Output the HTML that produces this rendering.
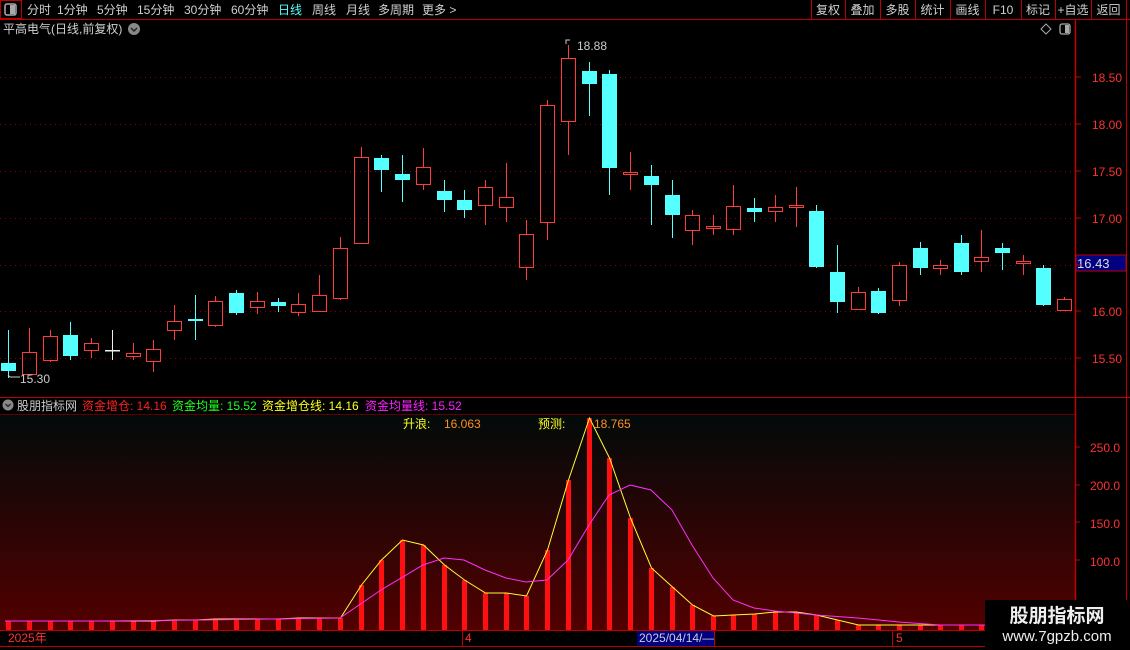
<!DOCTYPE html>
<html><head><meta charset="utf-8"><style>
html,body{margin:0;padding:0;background:#000;width:1130px;height:650px;overflow:hidden;font-family:"Liberation Sans","Noto Sans CJK SC",sans-serif}
svg{position:absolute;left:0;top:0}
</style></head><body>
<svg id="s" width="1130" height="650" xmlns="http://www.w3.org/2000/svg" font-family="Liberation Sans, Noto Sans CJK SC, sans-serif">
<defs><linearGradient id="g" x1="0" y1="0" x2="0" y2="1"><stop offset="0" stop-color="#020a0a"/><stop offset="1" stop-color="#520000"/></linearGradient></defs>
<rect x="0" y="415" width="1075" height="215" fill="url(#g)"/>
<line x1="0" y1="19.5" x2="1130" y2="19.5" stroke="#c00000"/>
<rect x="0.5" y="0.5" width="21" height="18" fill="none" stroke="#c00000"/>
<rect x="5" y="4" width="11" height="11" rx="2" fill="none" stroke="#aaa" stroke-width="1.5"/><rect x="10" y="5" width="5" height="9" fill="#aaa"/>
<g font-size="12" fill="#d0d0d0">
<text x="27" y="14">分时</text><text x="57" y="14">1分钟</text><text x="97" y="14">5分钟</text><text x="137" y="14">15分钟</text><text x="184" y="14">30分钟</text><text x="231" y="14">60分钟</text>
<text x="278" y="14" fill="#5ff">日线</text><text x="312" y="14">周线</text><text x="346" y="14">月线</text><text x="378" y="14">多周期</text><text x="422" y="14">更多 &gt;</text>
</g>
<g font-size="12" fill="#d0d0d0" text-anchor="middle">
<text x="828" y="14">复权</text><text x="862.5" y="14">叠加</text><text x="897.5" y="14">多股</text><text x="932.5" y="14">统计</text><text x="967.5" y="14">画线</text><text x="1003" y="14">F10</text><text x="1038" y="14">标记</text><text x="1073" y="14">+自选</text><text x="1108.5" y="14">返回</text>
</g>
<g stroke="#c00000"><line x1="811.5" y1="0" x2="811.5" y2="19"/><line x1="845.5" y1="0" x2="845.5" y2="19"/><line x1="880.5" y1="0" x2="880.5" y2="19"/><line x1="915.5" y1="0" x2="915.5" y2="19"/><line x1="950.5" y1="0" x2="950.5" y2="19"/><line x1="985.5" y1="0" x2="985.5" y2="19"/><line x1="1021.5" y1="0" x2="1021.5" y2="19"/><line x1="1055.5" y1="0" x2="1055.5" y2="19"/><line x1="1091.5" y1="0" x2="1091.5" y2="19"/><line x1="1126.5" y1="0" x2="1126.5" y2="650"/></g>
<text x="3" y="33" font-size="12" fill="#d0d0d0">平高电气(日线,前复权)</text>
<circle cx="134" cy="29" r="6" fill="#888"/><path d="M131 28l3 3 3-3" stroke="#222" stroke-width="1.5" fill="none"/>
<path d="M1046 24l5 5-5 5-5-5z" fill="none" stroke="#aaa"/>
<rect x="1060" y="24" width="10" height="10" rx="2" fill="none" stroke="#aaa" stroke-width="1.3"/><rect x="1065" y="25" width="4" height="8" fill="#aaa"/>
<line x1="1075.5" y1="19" x2="1075.5" y2="646" stroke="#c00000" stroke-width="1.5"/>
<line x1="0" y1="397.5" x2="1130" y2="397.5" stroke="#c00000"/>
<line x1="0" y1="414.5" x2="1075" y2="414.5" stroke="#c00000" stroke-width="0.5"/>
<line x1="0" y1="630.5" x2="1075" y2="630.5" stroke="#c00000"/>
<line x1="0" y1="646.5" x2="1130" y2="646.5" stroke="#c00000"/>
<g id="grid" stroke="#8a0000" stroke-dasharray="1,4"></g>
<g id="price" font-size="12" fill="#ff3030"></g>
<rect x="1076" y="255" width="50" height="16" fill="#000080" stroke="#c00000"/>
<text x="1077" y="268" font-size="13" fill="#ddd">16.43</text>
<g id="c"></g>
<text x="577" y="50" font-size="12" fill="#ccc">18.88</text><path d="M566 44v-4h4" stroke="#ccc" fill="none"/>
<text x="20" y="383" font-size="12" fill="#ccc">15.30</text><path d="M8 375l2 2h10" stroke="#ccc" fill="none"/>
<circle cx="8" cy="405" r="5.5" fill="#888"/><path d="M5.5 404l2.5 2.5 2.5-2.5" stroke="#222" stroke-width="1.3" fill="none"/>
<g font-size="12"><text x="17" y="410" fill="#ccc">股朋指标网</text><text x="82" y="410" fill="#ff2020">资金增仓: 14.16</text><text x="172" y="410" fill="#20ff20">资金均量: 15.52</text><text x="262" y="410" fill="#ffff20">资金增仓线: 14.16</text><text x="365" y="410" fill="#ff20ff">资金均量线: 15.52</text>
<text x="403" y="428" fill="#ffff20">升浪:</text><text x="444" y="428" fill="#ff9020">16.063</text><text x="538" y="428" fill="#ffff20">预测:</text><text x="594" y="428" fill="#ff9020">18.765</text></g>
<g id="ind"></g>
<g font-size="12" fill="#ff3030"><text x="1090" y="452">250.0</text><text x="1090" y="490">200.0</text><text x="1090" y="528">150.0</text><text x="1090" y="566">100.0</text></g>
<g stroke="#c00000"><line x1="1076" y1="447" x2="1080" y2="447"/><line x1="1076" y1="485" x2="1080" y2="485"/><line x1="1076" y1="522" x2="1080" y2="522"/><line x1="1076" y1="560" x2="1080" y2="560"/></g>
<text x="8" y="642" font-size="12" fill="#ff3030">2025年</text>
<line x1="462.5" y1="631" x2="462.5" y2="646" stroke="#c00000"/><text x="465" y="642" font-size="12" fill="#ff3030">4</text>
<rect x="637" y="631" width="77" height="15" fill="#000080"/><text x="639" y="642" font-size="12" fill="#ccc">2025/04/14/—</text>
<line x1="714.5" y1="631" x2="714.5" y2="646" stroke="#c00000"/>
<line x1="892.5" y1="631" x2="892.5" y2="646" stroke="#c00000"/><text x="896" y="642" font-size="12" fill="#ff3030">5</text>
<rect x="985" y="600" width="145" height="50" fill="#000"/>
<text x="1057" y="622" font-size="19" font-weight="bold" fill="#eee" text-anchor="middle">股朋指标网</text>
<text x="1057" y="641" font-size="15" fill="#eee" text-anchor="middle">www.7gpzb.com</text>
</svg>
<script>
var NS="http://www.w3.org/2000/svg";
function el(p,t,a){var e=document.createElementNS(NS,t);for(var k in a)e.setAttribute(k,a[k]);p.appendChild(e);return e;}
var grid=document.getElementById('grid'),price=document.getElementById('price');
var lv=[[77,"18.50"],[124,"18.00"],[171,"17.50"],[218,"17.00"],[265,""],[311,"16.00"],[358,"15.50"]];
lv.forEach(function(l){el(grid,'line',{x1:0,y1:l[0]+.5,x2:1075,y2:l[0]+.5});el(document.getElementById('s'),'line',{x1:1076,y1:l[0],x2:1081,y2:l[0],stroke:'#c00000'});if(l[1]){var t=el(price,'text',{x:1092,y:l[0]+5});t.textContent=l[1];}});
var C=[[8,'c',363,371,330,378],[29,'r',352,374,328,376],[50,'r',336,360,330,362],[70,'c',335,356,322,360],[91,'r',343,350,338,358],[112,'w',350,351,330,360],[133,'r',353,356,343,360],[153,'r',349,361,340,372],[174,'r',321,330,305,340],[195,'c',319,321,295,340],[215,'r',301,325,296,327],[236,'c',293,313,290,315],[257,'r',301,307,292,314],[278,'c',302,306,298,312],[298,'r',304,312,293,316],[319,'r',295,311,275,312],[340,'r',248,298,237,300],[361,'r',157,243,147,244],[381,'c',158,170,155,192],[402,'c',174,180,155,202],[423,'r',167,184,148,190],[444,'c',191,200,180,212],[464,'c',200,210,190,218],[485,'r',187,205,180,225],[506,'r',197,207,163,222],[526,'r',234,267,220,280],[547,'r',105,222,100,240],[568,'r',58,121,45,155],[589,'c',71,84,62,116],[609,'c',74,168,70,195],[630,'r',172,174,152,190],[651,'c',176,185,165,225],[672,'c',195,215,180,238],[692,'r',215,230,210,245],[713,'r',226,228,215,235],[733,'r',206,229,185,235],[754,'c',208,212,198,222],[775,'r',207,211,195,222],[796,'r',205,207,187,227],[816,'c',211,267,205,268],[837,'c',272,302,245,313],[858,'r',292,309,287,310],[878,'c',291,313,288,314],[899,'r',265,300,262,306],[920,'c',248,268,242,275],[940,'r',265,268,260,275],[961,'c',243,272,235,275],[981,'r',257,261,230,272],[1002,'c',248,253,243,270],[1023,'r',261,263,255,275],[1043,'c',268,305,265,306],[1064,'r',299,310,297,310]];
var cg=document.getElementById('c');
C.forEach(function(d){var x=d[0],col=d[1]=='c'?'#54ffff':(d[1]=='w'?'#eee':'#ff3c3c');
if(d[1]=='r'){el(cg,'line',{x1:x+.5,y1:d[4],x2:x+.5,y2:d[2],stroke:col});el(cg,'line',{x1:x+.5,y1:d[3],x2:x+.5,y2:d[5],stroke:col});el(cg,'rect',{x:x-6.5,y:d[2]+.5,width:14,height:Math.max(d[3]-d[2],1),fill:'none',stroke:col});}
else{el(cg,'line',{x1:x+.5,y1:d[4],x2:x+.5,y2:d[5],stroke:col});el(cg,'rect',{x:x-7,y:d[2],width:15,height:Math.max(d[3]-d[2],1.5),fill:col});}});
var B=[621,621,621,621,621,621,621,621,620,620,619,619,619,619,618,618,618,585,560,540,545,565,580,593,593,596,550,480,418,458,518,568,587,605,616,615,614,612,612,615,620,625,625,625,625,625,625,625,625,624,624,624];
var M=[[5,621],[100,621],[200,620],[340,618],[381,590],[423,565],[444,558],[464,560],[485,570],[506,578],[526,582],[547,580],[568,560],[589,525],[609,495],[630,485],[651,490],[672,510],[692,545],[713,578],[733,600],[754,608],[775,611],[796,613],[816,615],[858,618],[899,622],[940,625],[1070,625]];
var ig=document.getElementById('ind');var yp="";
C.forEach(function(d,i){var x=d[0],t=B[i];el(ig,'rect',{x:x-2,y:t,width:5,height:630-t,fill:'#ff1010'});yp+=(i?'L':'M')+(x+.5)+' '+t;});
el(ig,'path',{d:yp,stroke:'#ffff30',fill:'none','stroke-width':1});
var mp=M.map(function(p,i){return (i?'L':'M')+p[0]+' '+p[1];}).join('');
el(ig,'path',{d:mp,stroke:'#ff30ff',fill:'none','stroke-width':1});
</script>
</body></html>
